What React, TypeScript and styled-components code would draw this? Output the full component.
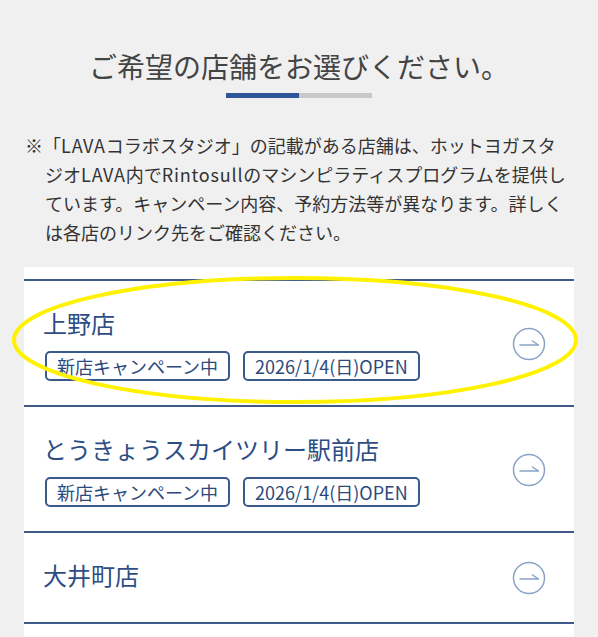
import styled, { createGlobalStyle } from 'styled-components';

const GlobalStyle = createGlobalStyle`
  * { box-sizing: border-box; }
  body {
    margin: 0;
    background: #f0f0f0;
    font-family: "Noto Sans CJK JP", "Noto Sans", sans-serif;
  }
`;

type Store = { name: string; tags: string[] };

const stores: Store[] = [
  { name: '上野店', tags: ['新店キャンペーン中', '2026/1/4(日)OPEN'] },
  { name: 'とうきょうスカイツリー駅前店', tags: ['新店キャンペーン中', '2026/1/4(日)OPEN'] },
  { name: '大井町店', tags: [] },
];

function ArrowCircle() {
  return (
    <svg width="34" height="34" viewBox="0 0 34 34" fill="none">
      <circle cx="17" cy="17" r="15.5" stroke="#8aa2c6" strokeWidth="1.5" />
      <path d="M8 18h18.5l-6-4" stroke="#8aa2c6" strokeWidth="1.5" strokeLinecap="round" strokeLinejoin="round" />
    </svg>
  );
}

export default function App() {
  return (
    <>
      <GlobalStyle />
      <StPage>
        <StTitle>ご希望の店舗をお選びください。</StTitle>
        <StProgress>
          <StProgressFill />
        </StProgress>
        <StNote>
          ※「<StLatin>LAVA</StLatin>コラボスタジオ」の記載がある店舗は、ホットヨガスタ
          <br />
          ジオ<StLatin>LAVA</StLatin>内で<StLatin>Rintosull</StLatin>のマシンピラティスプログラムを提供し
          <br />
          ています。キャンペーン内容、予約方法等が異なります。詳しく
          <br />
          は各店のリンク先をご確認ください。
        </StNote>
        <StList>
          {stores.map((store) => (
            <StItem key={store.name}>
              <StInfo>
                <StName>{store.name}</StName>
                {store.tags.length > 0 && (
                  <StTags>
                    {store.tags.map((tag) => (
                      <StTag key={tag}>{tag}</StTag>
                    ))}
                  </StTags>
                )}
              </StInfo>
              <ArrowCircle />
            </StItem>
          ))}
        </StList>
        <StMark viewBox="0 0 598 637" width="598" height="637">
          <ellipse cx="295" cy="340" rx="281" ry="62" fill="none" stroke="#fff200" strokeWidth="4" />
        </StMark>
      </StPage>
    </>
  );
}

const StPage = styled.main`
  position: relative;
  display: flex;
  flex-direction: column;
  align-items: center;
  padding-top: 47px;
`;

const StTitle = styled.h1`
  margin: 0;
  font-size: 28px;
  line-height: 39px;
  font-weight: 400;
  color: #444;
`;

const StProgress = styled.div`
  width: 146px;
  height: 5px;
  margin-top: 7px;
  background: #c8c8c8;
`;

const StProgressFill = styled.div`
  width: 50%;
  height: 100%;
  background: #2e5597;
`;

const StNote = styled.p`
  align-self: stretch;
  margin: 33px 0 0;
  padding: 0 20px 0 45px;
  text-indent: -20px;
  font-size: 18px;
  line-height: 29px;
  color: #333;
  white-space: nowrap;
`;

const StLatin = styled.span`
  letter-spacing: 0.8px;
`;

const StList = styled.ul`
  align-self: stretch;
  margin: 20px 24px 0 24px;
  padding: 12px 0 40px;
  list-style: none;
  background: #fff;
`;

const StItem = styled.li`
  display: flex;
  align-items: center;
  justify-content: space-between;
  min-height: 93px;
  padding: 25px 28px 24px 19px;
  border-top: 2px solid #3d5a88;

  &:last-child {
    border-bottom: 2px solid #3d5a88;
  }
`;

const StInfo = styled.div`
  display: flex;
  flex-direction: column;
  align-self: flex-start;
  gap: 11px;
`;

const StName = styled.div`
  font-size: 24px;
  line-height: 34px;
  color: #2d4d84;
`;

const StTags = styled.div`
  display: flex;
  gap: 13px;
  padding-left: 2px;
`;

const StTag = styled.span`
  height: 30px;
  padding: 0 10px;
  border: 2px solid #3a5a8c;
  border-radius: 5px;
  font-size: 18px;
  line-height: 26px;
  color: #2d4a7c;
`;

const StMark = styled.svg`
  position: absolute;
  top: 0;
  left: 0;
  pointer-events: none;
`;
